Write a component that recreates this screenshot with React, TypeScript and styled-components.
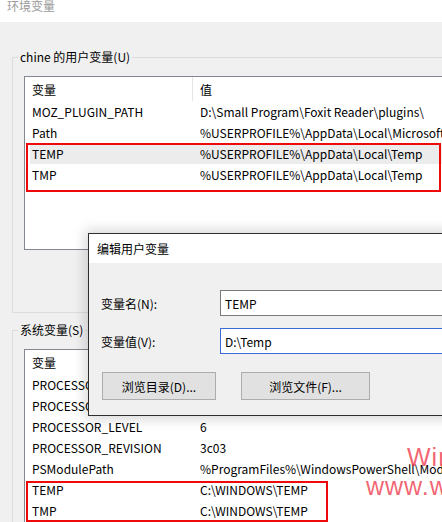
import React from "react";
import styled, { createGlobalStyle } from "styled-components";

const FONT = `"Microsoft YaHei UI", "Noto Sans CJK SC", "Noto Sans", sans-serif`;

const GlobalStyle = createGlobalStyle`
  html, body { margin: 0; padding: 0; background: #f0f0f0; overflow: hidden; }
  body { font-family: ${FONT}; font-size: 12px; color: #000; }
  * { box-sizing: border-box; }
`;

const Window = styled.div`
  position: relative;
  width: 442px;
  height: 522px;
  overflow: hidden;
  background: #f0f0f0;
  display: flex;
  flex-direction: column;
`;

const TitleBar = styled.div`
  height: 22px;
  flex-shrink: 0;
  background: #fff;
  color: #9a9a9a;
  padding-left: 7px;
  line-height: 12px;
  font-size: 12px;
`;

const Content = styled.div`
  display: flex;
  flex-direction: column;
  gap: 9px;
  padding: 27px 0 0 12px;
`;

const Group = styled.fieldset<{ $bottom: number }>`
  margin: 0;
  min-width: 0;
  width: 480px;
  flex-shrink: 0;
  border: 1px solid #dcdcdc;
  padding: 11px 0 ${(p) => p.$bottom}px 11px;
`;

const Legend = styled.legend`
  margin-left: -6px;
  padding: 0 2px;
  line-height: 16px;
  font-size: 12px;
  color: #000;
`;

const List = styled.div<{ $height: number }>`
  height: ${(p) => p.$height}px;
  background: #fff;
  border: 1px solid #828790;
  padding-left: 5px;
  overflow: hidden;
  display: flex;
  flex-direction: column;
`;

const Row = styled.div<{ $head?: boolean; $selected?: boolean }>`
  display: flex;
  flex-shrink: 0;
  height: ${(p) => (p.$head ? 24 : 21)}px;
  background: ${(p) => (p.$selected ? "#ececec" : "transparent")};
  white-space: nowrap;
`;

const NameCell = styled.div<{ $head?: boolean }>`
  width: 163px;
  flex-shrink: 0;
  padding-left: 2px;
  display: flex;
  align-items: center;
  overflow: hidden;
  border-right: ${(p) => (p.$head ? "1px solid #e5e5e5" : "none")};
`;

const ValueCell = styled.div`
  padding-left: 7px;
  display: flex;
  align-items: center;
`;

const Mark = styled.div<{ $l: number; $t: number; $w: number; $h: number }>`
  position: absolute;
  left: ${(p) => p.$l}px;
  top: ${(p) => p.$t}px;
  width: ${(p) => p.$w}px;
  height: ${(p) => p.$h}px;
  border: 2px solid #ee0a0a;
  pointer-events: none;
`;

const Dialog = styled.div`
  position: absolute;
  left: 88px;
  top: 233px;
  width: 400px;
  height: 183px;
  border: 1px solid #2e2e2e;
  background: #f0f0f0;
  box-shadow: 0 0 12px 3px rgba(0, 0, 0, 0.16);
  display: flex;
  flex-direction: column;
`;

const DialogTitle = styled.div`
  height: 29px;
  flex-shrink: 0;
  background: #fff;
  padding-left: 8px;
  display: flex;
  align-items: center;
`;

const DialogBody = styled.div`
  flex: 1;
  padding: 27px 0 0 12px;
  display: flex;
  flex-direction: column;
  gap: 12px;
`;

const Field = styled.div`
  display: flex;
  align-items: center;
  height: 26px;
`;

const FieldLabel = styled.div`
  width: 119px;
  flex-shrink: 0;
`;

const TextBox = styled.div<{ $focused?: boolean }>`
  width: 260px;
  height: 26px;
  background: #fff;
  border: 1px solid ${(p) => (p.$focused ? "#3c6ad6" : "#7a7a7a")};
  padding-left: 4px;
  display: flex;
  align-items: center;
`;

const ButtonRow = styled.div`
  display: flex;
  gap: 25px;
  margin-top: 6px;
  margin-left: 1px;
`;

const Button = styled.div<{ $w: number }>`
  width: ${(p) => p.$w}px;
  height: 28px;
  background: #e1e1e1;
  border: 1px solid #adadad;
  display: flex;
  align-items: center;
  justify-content: center;
`;

const Watermark = styled.div<{ $l: number; $t: number }>`
  position: absolute;
  left: ${(p) => p.$l}px;
  top: ${(p) => p.$t}px;
  font-family: "Liberation Sans", Arial, sans-serif;
  font-size: 25px;
  line-height: 25px;
  letter-spacing: 1px;
  color: rgba(238, 40, 60, 0.72);
  white-space: nowrap;
  pointer-events: none;
`;

type Var = { name: string; value: string; selected?: boolean };

const userVars: Var[] = [
  { name: "MOZ_PLUGIN_PATH", value: "D:\\Small Program\\Foxit Reader\\plugins\\" },
  { name: "Path", value: "%USERPROFILE%\\AppData\\Local\\Microsoft\\WindowsApps;" },
  { name: "TEMP", value: "%USERPROFILE%\\AppData\\Local\\Temp", selected: true },
  { name: "TMP", value: "%USERPROFILE%\\AppData\\Local\\Temp" },
];

const sysVars: Var[] = [
  { name: "PROCESSOR_ARCHITECTURE", value: "AMD64" },
  { name: "PROCESSOR_IDENTIFIER", value: "Intel64 Family 6 Model 60 Stepping 3, GenuineIntel" },
  { name: "PROCESSOR_LEVEL", value: "6" },
  { name: "PROCESSOR_REVISION", value: "3c03" },
  { name: "PSModulePath", value: "%ProgramFiles%\\WindowsPowerShell\\Modules;" },
  { name: "TEMP", value: "C:\\WINDOWS\\TEMP" },
  { name: "TMP", value: "C:\\WINDOWS\\TEMP" },
];

const VarList: React.FC<{ vars: Var[]; height: number }> = ({ vars, height }) => (
  <List $height={height}>
    <Row $head>
      <NameCell $head>变量</NameCell>
      <ValueCell>值</ValueCell>
    </Row>
    {vars.map((v) => (
      <Row key={v.name} $selected={v.selected}>
        <NameCell>{v.name}</NameCell>
        <ValueCell>{v.value}</ValueCell>
      </Row>
    ))}
  </List>
);

export default function App() {
  return (
    <>
      <GlobalStyle />
      <Window>
        <TitleBar>环境变量</TitleBar>
        <Content>
          <Group $bottom={62}>
            <Legend>chine 的用户变量(U)</Legend>
            <VarList vars={userVars} height={174} />
          </Group>
          <Group $bottom={20}>
            <Legend>系统变量(S)</Legend>
            <VarList vars={sysVars} height={200} />
          </Group>
        </Content>

        <Mark $l={26} $t={143} $w={415} $h={49} />
        <Mark $l={26} $t={481} $w={302} $h={41} />

        <Dialog>
          <DialogTitle>编辑用户变量</DialogTitle>
          <DialogBody>
            <Field>
              <FieldLabel>变量名(N):</FieldLabel>
              <TextBox>TEMP</TextBox>
            </Field>
            <Field>
              <FieldLabel>变量值(V):</FieldLabel>
              <TextBox $focused>D:\Temp</TextBox>
            </Field>
            <ButtonRow>
              <Button $w={114}>浏览目录(D)...</Button>
              <Button $w={129}>浏览文件(F)...</Button>
            </ButtonRow>
          </DialogBody>
        </Dialog>

        <Watermark $l={407} $t={445}>Win</Watermark>
        <Watermark $l={366} $t={474}>www.w</Watermark>
      </Window>
    </>
  );
}
